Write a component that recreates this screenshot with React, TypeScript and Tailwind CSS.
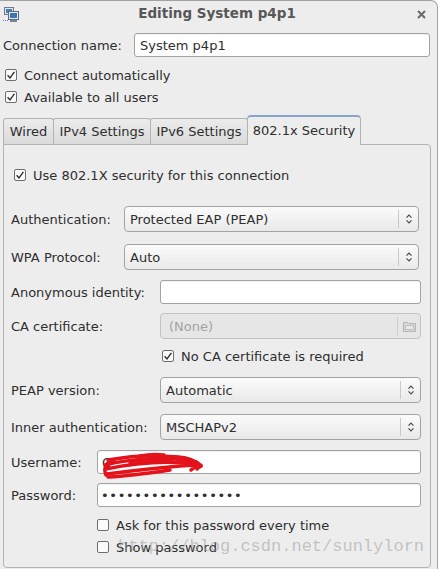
import React from "react";

const Check = ({ checked }: { checked?: boolean }) => (
  <span className="w-[12px] h-[12px] border border-[#6e6e6e] rounded-[2px] bg-[#fbfbfb] flex items-center justify-center shrink-0">
    {checked && (
      <svg width="10" height="10" viewBox="0 0 10 10">
        <path d="M1.6 5.2 L4 7.9 L8.4 1.9" stroke="#2e2e2e" strokeWidth="1.4" fill="none" />
      </svg>
    )}
  </span>
);

const Arrows = () => (
  <svg width="8" height="12" viewBox="0 0 8 12">
    <path d="M1.5 4.6 L4 2.1 L6.5 4.6 M1.5 7.4 L4 9.9 L6.5 7.4" stroke="#4a4a4a" strokeWidth="1.2" fill="none" />
  </svg>
);

const Combo = ({ text, cls }: { text: string; cls: string }) => (
  <div className={`h-[26px] ${cls} border border-[#a3a3a3] rounded-[4px] bg-linear-to-b from-[#fbfbfb] to-[#e9e9e9] flex items-center`}>
    <span className="flex-1 pl-[5px] text-[#2e2e2e]">{text}</span>
    <span className="w-px h-[18px] bg-[#c9c9c9]" />
    <span className="w-[19px] flex items-center justify-center">
      <Arrows />
    </span>
  </div>
);

const Input = ({ cls, children }: { cls: string; children?: React.ReactNode }) => (
  <div className={`h-[24px] ${cls} border border-[#a3a3a3] rounded-[3px] bg-white flex items-center relative shadow-[inset_0_1px_1px_rgba(0,0,0,0.06)]`}>
    {children}
  </div>
);

export default function App() {
  return (
    <div className="w-[438px] h-[569px] bg-[#ededed] overflow-hidden relative border-r border-t border-[#a2a2a2] rounded-tr-[7px] font-['DejaVu_Sans',sans-serif] text-[13px] text-[#2e2e2e] leading-none">
      {/* Title bar */}
      <div className="h-[26px] grid grid-cols-[30px_1fr_30px] items-center">
        <div className="pl-[3px] pt-[1px] flex items-center">
          <svg width="16" height="16" viewBox="0 0 16 16">
            <rect x="1.5" y="0.5" width="9" height="7" fill="#dfe6ef" stroke="#6d7b8c" />
            <rect x="3" y="2" width="6" height="4" fill="#4f7fb8" />
            <rect x="5.5" y="4.5" width="10" height="8" fill="#e6ebf1" stroke="#5d6b7c" />
            <rect x="7" y="6" width="7" height="5" fill="#3f74b6" />
            <rect x="7" y="13" width="7" height="2" fill="#7a8694" />
            <rect x="0" y="13" width="1" height="1" fill="#5b7fb0" />
            <rect x="2" y="13" width="1" height="1" fill="#5b7fb0" />
            <rect x="4" y="13" width="1" height="1" fill="#5b7fb0" />
          </svg>
        </div>
        <div className="text-center font-bold text-[13.5px] text-[#575757] pr-[3px]">Editing System p4p1</div>
        <div className="flex items-center justify-center pr-[2px]">
          <svg width="9" height="9" viewBox="0 0 9 9">
            <path d="M1 1 L8 8 M8 1 L1 8" stroke="#6a6a6a" strokeWidth="2" />
          </svg>
        </div>
      </div>

      {/* Connection name */}
      <div className="mt-[6px] h-[24px] flex items-center pl-[3px]">
        <span className="w-[131px]">Connection name:</span>
        <Input cls="w-[296px]">
          <span className="pl-[5px]">System p4p1</span>
        </Input>
      </div>

      <div className="mt-[7px] h-[22px] flex items-center pl-[5px] gap-[7px]">
        <Check checked />
        <span>Connect automatically</span>
      </div>
      <div className="h-[22px] flex items-center pl-[5px] gap-[7px]">
        <Check checked />
        <span>Available to all users</span>
      </div>

      {/* Tabs */}
      <div className="mt-[7px] pl-[3px] flex items-end h-[29px]">
        <div className="w-[51px] h-[26px] border border-b-0 border-[#b3b3b3] rounded-t-[3px] bg-linear-to-b from-[#ececec] to-[#dadada] flex items-center justify-center">
          Wired
        </div>
        <div className="-ml-px w-[98px] h-[26px] border border-b-0 border-[#b3b3b3] rounded-t-[3px] bg-linear-to-b from-[#ececec] to-[#dadada] flex items-center justify-center">
          IPv4 Settings
        </div>
        <div className="-ml-px w-[98px] h-[26px] border border-b-0 border-[#b3b3b3] rounded-t-[3px] bg-linear-to-b from-[#ececec] to-[#dadada] flex items-center justify-center">
          IPv6 Settings
        </div>
        <div className="-ml-px w-[114px] h-[30px] -mb-px relative z-10 border border-b-0 border-[#b3b3b3] border-t-2 border-t-[#86a5cc] rounded-t-[4px] bg-[#ededed] flex items-center justify-center pb-[2px]">
          802.1x Security
        </div>
      </div>

      {/* Panel */}
      <div className="ml-[3px] w-[428px] h-[424px] border border-[#b3b3b3] rounded-[4px] rounded-tl-none pl-[7px] relative">
        <div className="mt-[19px] h-[22px] flex items-center pl-[3px] gap-[7px]">
          <Check checked />
          <span>Use 802.1X security for this connection</span>
        </div>

        <div className="mt-[20px] h-[26px] flex items-center">
          <span className="w-[113px]">Authentication:</span>
          <Combo text="Protected EAP (PEAP)" cls="w-[295px]" />
        </div>
        <div className="mt-[12px] h-[26px] flex items-center">
          <span className="w-[113px]">WPA Protocol:</span>
          <Combo text="Auto" cls="w-[295px]" />
        </div>

        <div className="mt-[10px] h-[24px] flex items-center">
          <span className="w-[149px]">Anonymous identity:</span>
          <Input cls="w-[261px]" />
        </div>
        <div className="mt-[9px] h-[26px] flex items-center">
          <span className="w-[149px]">CA certificate:</span>
          <div className="h-[26px] w-[261px] border border-[#c2c2c2] rounded-[4px] bg-[#e6e6e6] flex items-center">
            <span className="flex-1 pl-[8px] text-[#a3a3a3]">(None)</span>
            <span className="w-px h-[18px] bg-[#cfcfcf]" />
            <span className="w-[22px] flex items-center justify-center">
              <svg width="13" height="11" viewBox="0 0 13 11">
                <path d="M0.5 1.5 H5 L6 2.5 H12.5 V10.5 H0.5 Z" fill="#d8d8d8" stroke="#b5b5b5" />
                <rect x="2.5" y="4.5" width="8" height="4" fill="#e9e9e9" stroke="#c2c2c2" />
              </svg>
            </span>
          </div>
        </div>

        <div className="mt-[6px] h-[22px] flex items-center pl-[151px] gap-[7px]">
          <Check checked />
          <span>No CA certificate is required</span>
        </div>

        <div className="mt-[10px] h-[26px] flex items-center">
          <span className="w-[149px]">PEAP version:</span>
          <Combo text="Automatic" cls="w-[261px]" />
        </div>
        <div className="mt-[11px] h-[26px] flex items-center">
          <span className="w-[149px]">Inner authentication:</span>
          <Combo text="MSCHAPv2" cls="w-[261px]" />
        </div>

        <div className="mt-[10px] h-[24px] flex items-center">
          <span className="w-[86px]">Username:</span>
          <Input cls="w-[324px]">
            <span className="pl-[4px]">C</span>
            <span className="ml-[80px]">s</span>
            <svg className="absolute left-[2px] top-[1px] overflow-visible" width="104" height="28" viewBox="0 0 104 28">
              <g stroke="#e3121b" strokeWidth="3.5" fill="none" strokeLinecap="round" strokeLinejoin="round">
                <path d="M8 8 C 25 5, 45 3, 62 4 S 86 4, 98 11" />
                <path d="M5 13 C 25 8, 55 5, 75 7 S 95 9, 101 14" />
                <path d="M6 17 C 30 12, 60 9, 85 11 S 99 14, 97 17" />
                <path d="M7 22 C 30 19, 55 16, 80 14 S 94 15, 91 18" />
                <path d="M6 23 C 3 16, 6 10, 14 8" />
                <path d="M8 25 C 30 24, 50 21, 70 18" />
                <path d="M30 11 C 45 8, 60 8, 72 9" />
                <path d="M40 4 C 50 2, 56 2, 64 3" />
              </g>
            </svg>
          </Input>
        </div>
        <div className="mt-[9px] h-[24px] flex items-center">
          <span className="w-[86px]">Password:</span>
          <Input cls="w-[324px]">
            <span className="pl-[3px] tracking-[0.65px] text-[#2e2e2e]">•••••••••••••••••</span>
          </Input>
        </div>

        <div className="mt-[8px] h-[20px] flex items-center pl-[86px] gap-[7px]">
          <Check />
          <span>Ask for this password every time</span>
        </div>
        <div className="mt-[2px] h-[20px] flex items-center pl-[86px] gap-[7px]">
          <Check />
          <span>Show password</span>
        </div>

        <div className="absolute left-[114px] top-[393px] font-['Liberation_Mono',monospace] text-[17px] text-[rgba(150,150,150,0.5)] whitespace-nowrap pointer-events-none">
          http://blog.csdn.net/sunlylorn
        </div>
      </div>
    </div>
  );
}
